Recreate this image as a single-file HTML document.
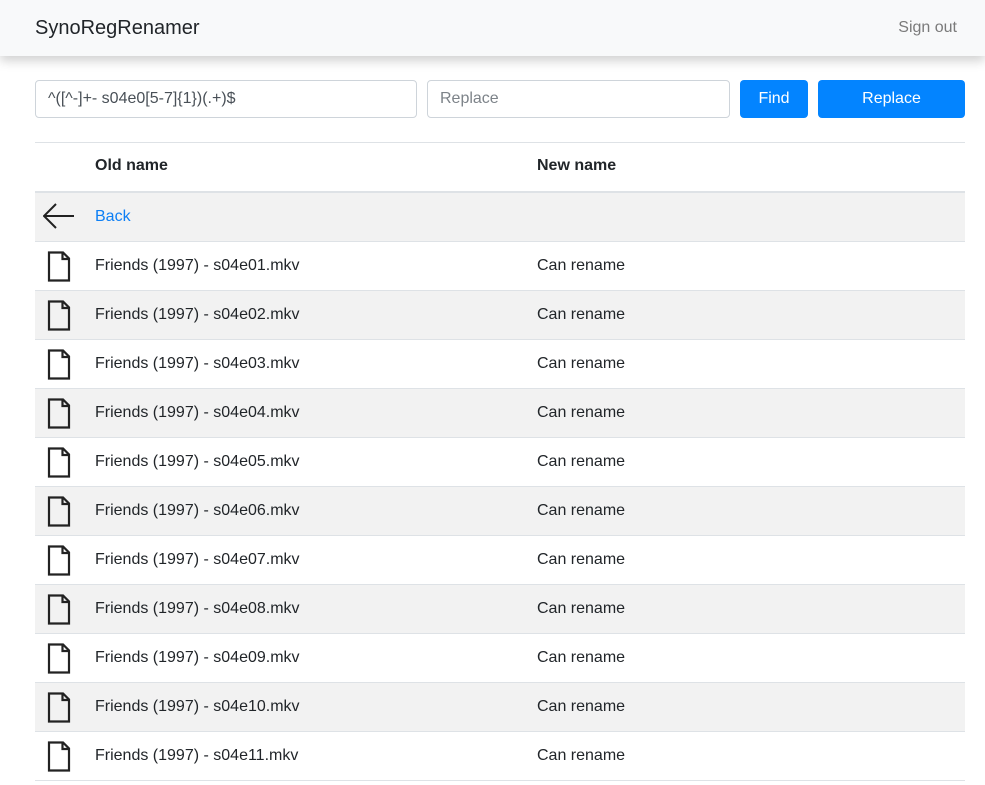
<!DOCTYPE html>
<html><head><meta charset="utf-8"><style>
*{box-sizing:border-box;margin:0;padding:0}
body{width:985px;height:785px;overflow:hidden;background:#fff;font-family:"Liberation Sans",sans-serif;color:#212529;font-size:16px;position:relative}
.nav{position:absolute;left:0;top:0;width:985px;height:56px;background:#f8f9fa;box-shadow:0 5px 10px rgba(0,0,0,.18);z-index:2}
.brand{position:absolute;left:35px;top:17px;font-size:20px;color:#212529}
.so{position:absolute;right:28px;top:19px;color:#7a7a7a;font-size:16px}
.inp{position:absolute;top:80px;height:38px;border:1px solid #ced4da;border-radius:4px;padding:0 12px;line-height:36px;font-size:16px}
.btn{position:absolute;top:80px;height:38px;background:#0384ff;color:#fff;border-radius:4px;text-align:center;line-height:38px;font-size:16px}
.tbl{position:absolute;left:35px;top:142px;width:930px;border-top:1px solid #dee2e6}
.hd{height:50px;border-bottom:2px solid #dee2e6;font-weight:bold;position:relative}
.row{height:49px;border-bottom:1px solid #dee2e6;position:relative}
.g{background:#f2f2f2}
.c1{position:absolute;left:60px;top:15px}
.c2{position:absolute;left:502px;top:15px}
.hd .c1,.hd .c2{top:14px}
.ic{position:absolute;left:12px;top:9px}
</style></head><body>
<div class="nav"><div class="brand">SynoRegRenamer</div><div class="so">Sign out</div></div>
<div class="inp" style="left:35px;width:382px;color:#495057">^([^-]+- s04e0[5-7]{1})(.+)$</div>
<div class="inp" style="left:427px;width:303px;color:#7d8389">Replace</div>
<div class="btn" style="left:740px;width:68px">Find</div>
<div class="btn" style="left:818px;width:147px">Replace</div>
<div class="tbl">
<div class="hd"><span class="c1">Old name</span><span class="c2">New name</span></div>
<div class="row g"><svg style="position:absolute;left:8px;top:10px" width="32" height="26" viewBox="0 0 32 26"><path d="M31 13H2M13 1L1 13l12 12" fill="none" stroke="#222" stroke-width="2"/></svg><span class="c1" style="color:#0d7ff5">Back</span></div>
</div>
<script>
var t=document.querySelector('.tbl');
for(var i=1;i<=11;i++){var d=document.createElement('div');d.className='row'+(i%2==0?' g':'');
var n=(i<10?'0':'')+i;
d.innerHTML='<svg class="ic" width="24" height="31" viewBox="0 0 24 31"><path d="M2 1.5h14l6 6V29.5H2z M15.5 1.5v6.5h6.5" fill="none" stroke="#222" stroke-width="2.2" stroke-linejoin="miter"/></svg><span class="c1">Friends (1997) - s04e'+n+'.mkv</span><span class="c2">Can rename</span>';
t.appendChild(d);}
</script>
</body></html>
